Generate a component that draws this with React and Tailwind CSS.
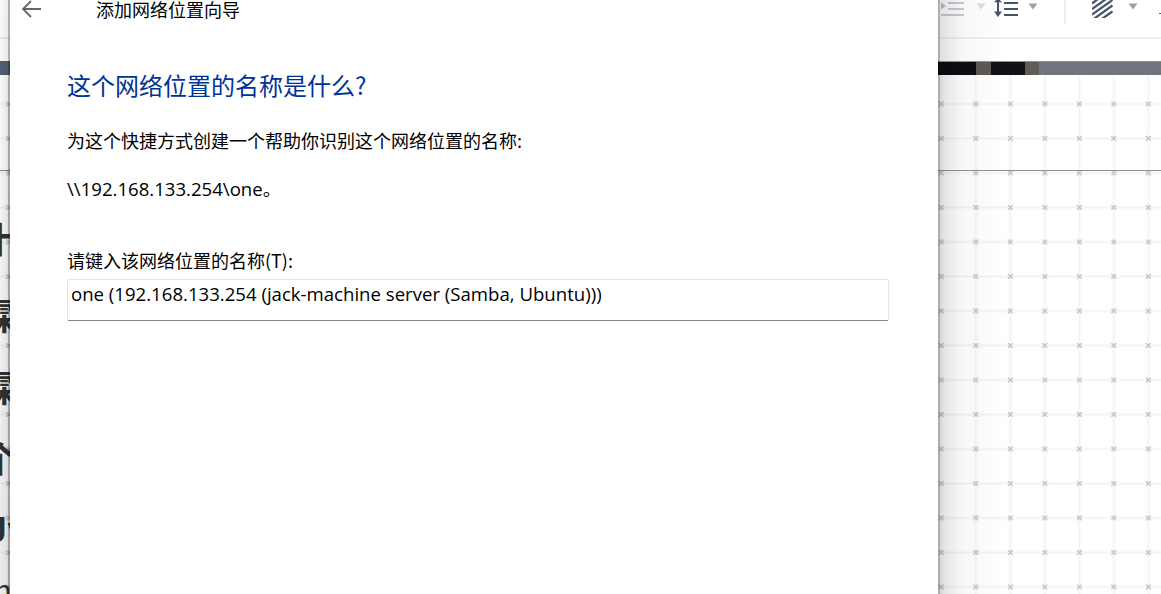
import { useState } from "react";

const pageGlyphs = [
  { text: "计", cls: "top-[216px] -left-[24px] text-[35px] leading-[44px] font-bold" },
  { text: "霖", cls: "top-[292px] -left-[21px] text-[36px] leading-[44px] font-bold" },
  { text: "霖", cls: "top-[364px] -left-[21px] text-[36px] leading-[44px] font-bold" },
  { text: "个", cls: "top-[435px] -left-[18px] text-[36px] leading-[44px] font-bold" },
  { text: "Jv", cls: "top-[506px] -left-[12px] text-[34px] leading-[44px] font-bold" },
  { text: "n", cls: "top-[568px] -left-[6px] text-[29px] leading-[40px]" },
];

function Grid({ id, x, y, className }) {
  return (
    <svg className={className} aria-hidden="true">
      <defs>
        <pattern id={id} x={x} y={y} width="34.5" height="34.5" patternUnits="userSpaceOnUse">
          <path d="M17.25 0v34.5M0 17.25h34.5" stroke="#f3f3f3" strokeWidth="2" />
          <path
            d="M14.9 14.9l4.7 4.7M19.6 14.9l-4.7 4.7"
            stroke="#b9b9b9"
            strokeWidth="1.3"
          />
        </pattern>
      </defs>
      <rect width="100%" height="100%" fill={`url(#${id})`} />
    </svg>
  );
}

function Caret({ faded }) {
  return (
    <svg width="10" height="7" viewBox="0 0 10 7" className="shrink-0">
      <path d="M.5.5h9L5 6.500z" fill={faded ? "#dcdcdc" : "#a0a0a0"} />
    </svg>
  );
}

function Toolbar() {
  return (
    <div className="flex h-[39px] shrink-0 items-start overflow-hidden border-b-2 border-[#f0f0f0]">
      <svg width="23" height="17" viewBox="0 0 23 17" className="ml-[3px] shrink-0">
        <path d="M0 2.500l5 3.500-5 3.500z" fill="#bfc0c6" />
        <path d="M7 3h16M7 9h16M0 15h23" stroke="#c8cad3" strokeWidth="2" />
      </svg>
      <div className="mt-[3px] ml-[12px]">
        <Caret faded />
      </div>
      <svg width="24" height="18" viewBox="0 0 24 18" className="ml-[8px] shrink-0">
        <path d="M4 0v13" stroke="#46536a" strokeWidth="2" />
        <path d="M0 11.500h8L4 17z" fill="#46536a" />
        <path d="M0 2.200l4-4 4 4z" fill="#46536a" />
        <path d="M10 3h14M10 9h14M10 15h14" stroke="#46536a" strokeWidth="2" />
      </svg>
      <div className="mt-[3px] ml-[10px]">
        <Caret />
      </div>
      <div className="ml-[26px] h-6 w-[2px] shrink-0 bg-[#eeebf2]" />
      <svg width="21" height="18" viewBox="0 0 21 18" className="ml-[26px] shrink-0">
        <path
          d="M0 3.500L6-1M0 9L14-1M0 14.500L20.500 0M1 19.500L20.500 5.500M9 19.500L20.500 11.500"
          stroke="#46536a"
          strokeWidth="2.200"
        />
      </svg>
      <div className="mt-[3px] ml-[15px]">
        <Caret />
      </div>
      <div className="mt-[13px] ml-auto h-px w-[2px] shrink-0 bg-[#555555]" />
    </div>
  );
}

function PageLeft() {
  return (
    <aside className="relative flex w-[10px] shrink-0 flex-col overflow-hidden bg-white">
      <div className="h-[39px] shrink-0 border-b-2 border-[#e9e9e9]" />
      <div className="h-[22px] shrink-0" />
      <div className="h-[14px] shrink-0 bg-[#536174]" />
      <div className="relative flex-1">
        <Grid id="grid-left" x="-8.750" y="11.800" className="h-full w-full" />
      </div>
      <div className="absolute top-[170px] left-0 h-px w-full bg-[#888888]" />
      {pageGlyphs.map((g, i) => (
        <span key={i} className={`absolute whitespace-nowrap text-[#333333] ${g.cls}`}>
          {g.text}
        </span>
      ))}
      <div className="absolute inset-0 bg-linear-to-b from-black/2 to-black/8" />
      <div className="absolute inset-0 bg-linear-to-r from-transparent to-black/8" />
      <div className="absolute inset-y-0 right-0 w-[2px] bg-black/25" />
    </aside>
  );
}

function PageRight() {
  return (
    <aside className="relative flex min-w-0 flex-1 flex-col overflow-hidden bg-white">
      <Toolbar />
      <div className="h-[22px] shrink-0" />
      <div className="flex h-[14px] shrink-0 border-t border-[#92968f]">
        <div className="w-[38px] bg-[#0b0d13]" />
        <div className="w-[15px] bg-[#5d5854]" />
        <div className="w-[34px] bg-[#111216]" />
        <div className="w-[14px] bg-[#5f5b59]" />
        <div className="flex-1 bg-[#70757f]" />
      </div>
      <div className="min-h-0 flex-1">
        <Grid id="grid-right" x="-13.900" y="11.700" className="h-full w-full" />
      </div>
      <div className="absolute top-[170px] left-0 h-px w-full bg-[#90928e]" />
      <div className="absolute inset-y-0 left-0 w-[70px] bg-linear-to-r from-black/13 via-black/3 via-35% to-transparent" />
      <div className="absolute inset-y-0 left-0 w-[2px] bg-black/22" />
    </aside>
  );
}

export default function App() {
  const [name, setName] = useState("one (192.168.133.254 (jack-machine server (Samba, Ubuntu)))");

  return (
    <div className="flex h-[594px] w-[1161px] overflow-hidden bg-white font-['Noto_Sans_CJK_SC',sans-serif] text-black">
      <PageLeft />
      <main className="flex w-[928px] shrink-0 flex-col bg-white">
        <header className="flex h-[20px] items-center pl-[12px]">
          <button aria-label="返回" className="mt-[-2px]">
            <svg width="20" height="18" viewBox="0 0 20 18" fill="none" stroke="#666666" strokeWidth="1.800">
              <path d="M1 9h18M9 1L1 9l8 8" />
            </svg>
          </button>
          <h1 className="mt-[-2px] ml-[54px] text-[18px] leading-[22px] whitespace-nowrap">添加网络位置向导</h1>
        </header>

        <section className="flex flex-col pr-[49px] pl-[57px]">
          <h2 className="mt-[47px] text-[24px] leading-[36px] text-[#003399]">
            这个网络位置的名称是什么?
          </h2>
          <p className="mt-[23px] text-[18px] leading-[28px]">
            为这个快捷方式创建一个帮助你识别这个网络位置的名称:
          </p>
          <p className="mt-[21px] font-['Open_Sans','Noto_Sans_CJK_SC',sans-serif] text-[18.600px] leading-[28px]">
            \\192.168.133.254\one。
          </p>
          <label htmlFor="location" className="mt-[43px] text-[18px] leading-[28px]">
            请键入该网络位置的名称(T):
          </label>
          <input
            id="location"
            value={name}
            onChange={(e) => setName(e.target.value)}
            className="mt-[5px] h-[42px] rounded-[2px] border border-[#e5e5e5] border-b-[#868686] px-[3px] pb-[13px] font-['Open_Sans',sans-serif] text-[18.600px] outline-none"
          />
        </section>
      </main>
      <PageRight />
    </div>
  );
}
